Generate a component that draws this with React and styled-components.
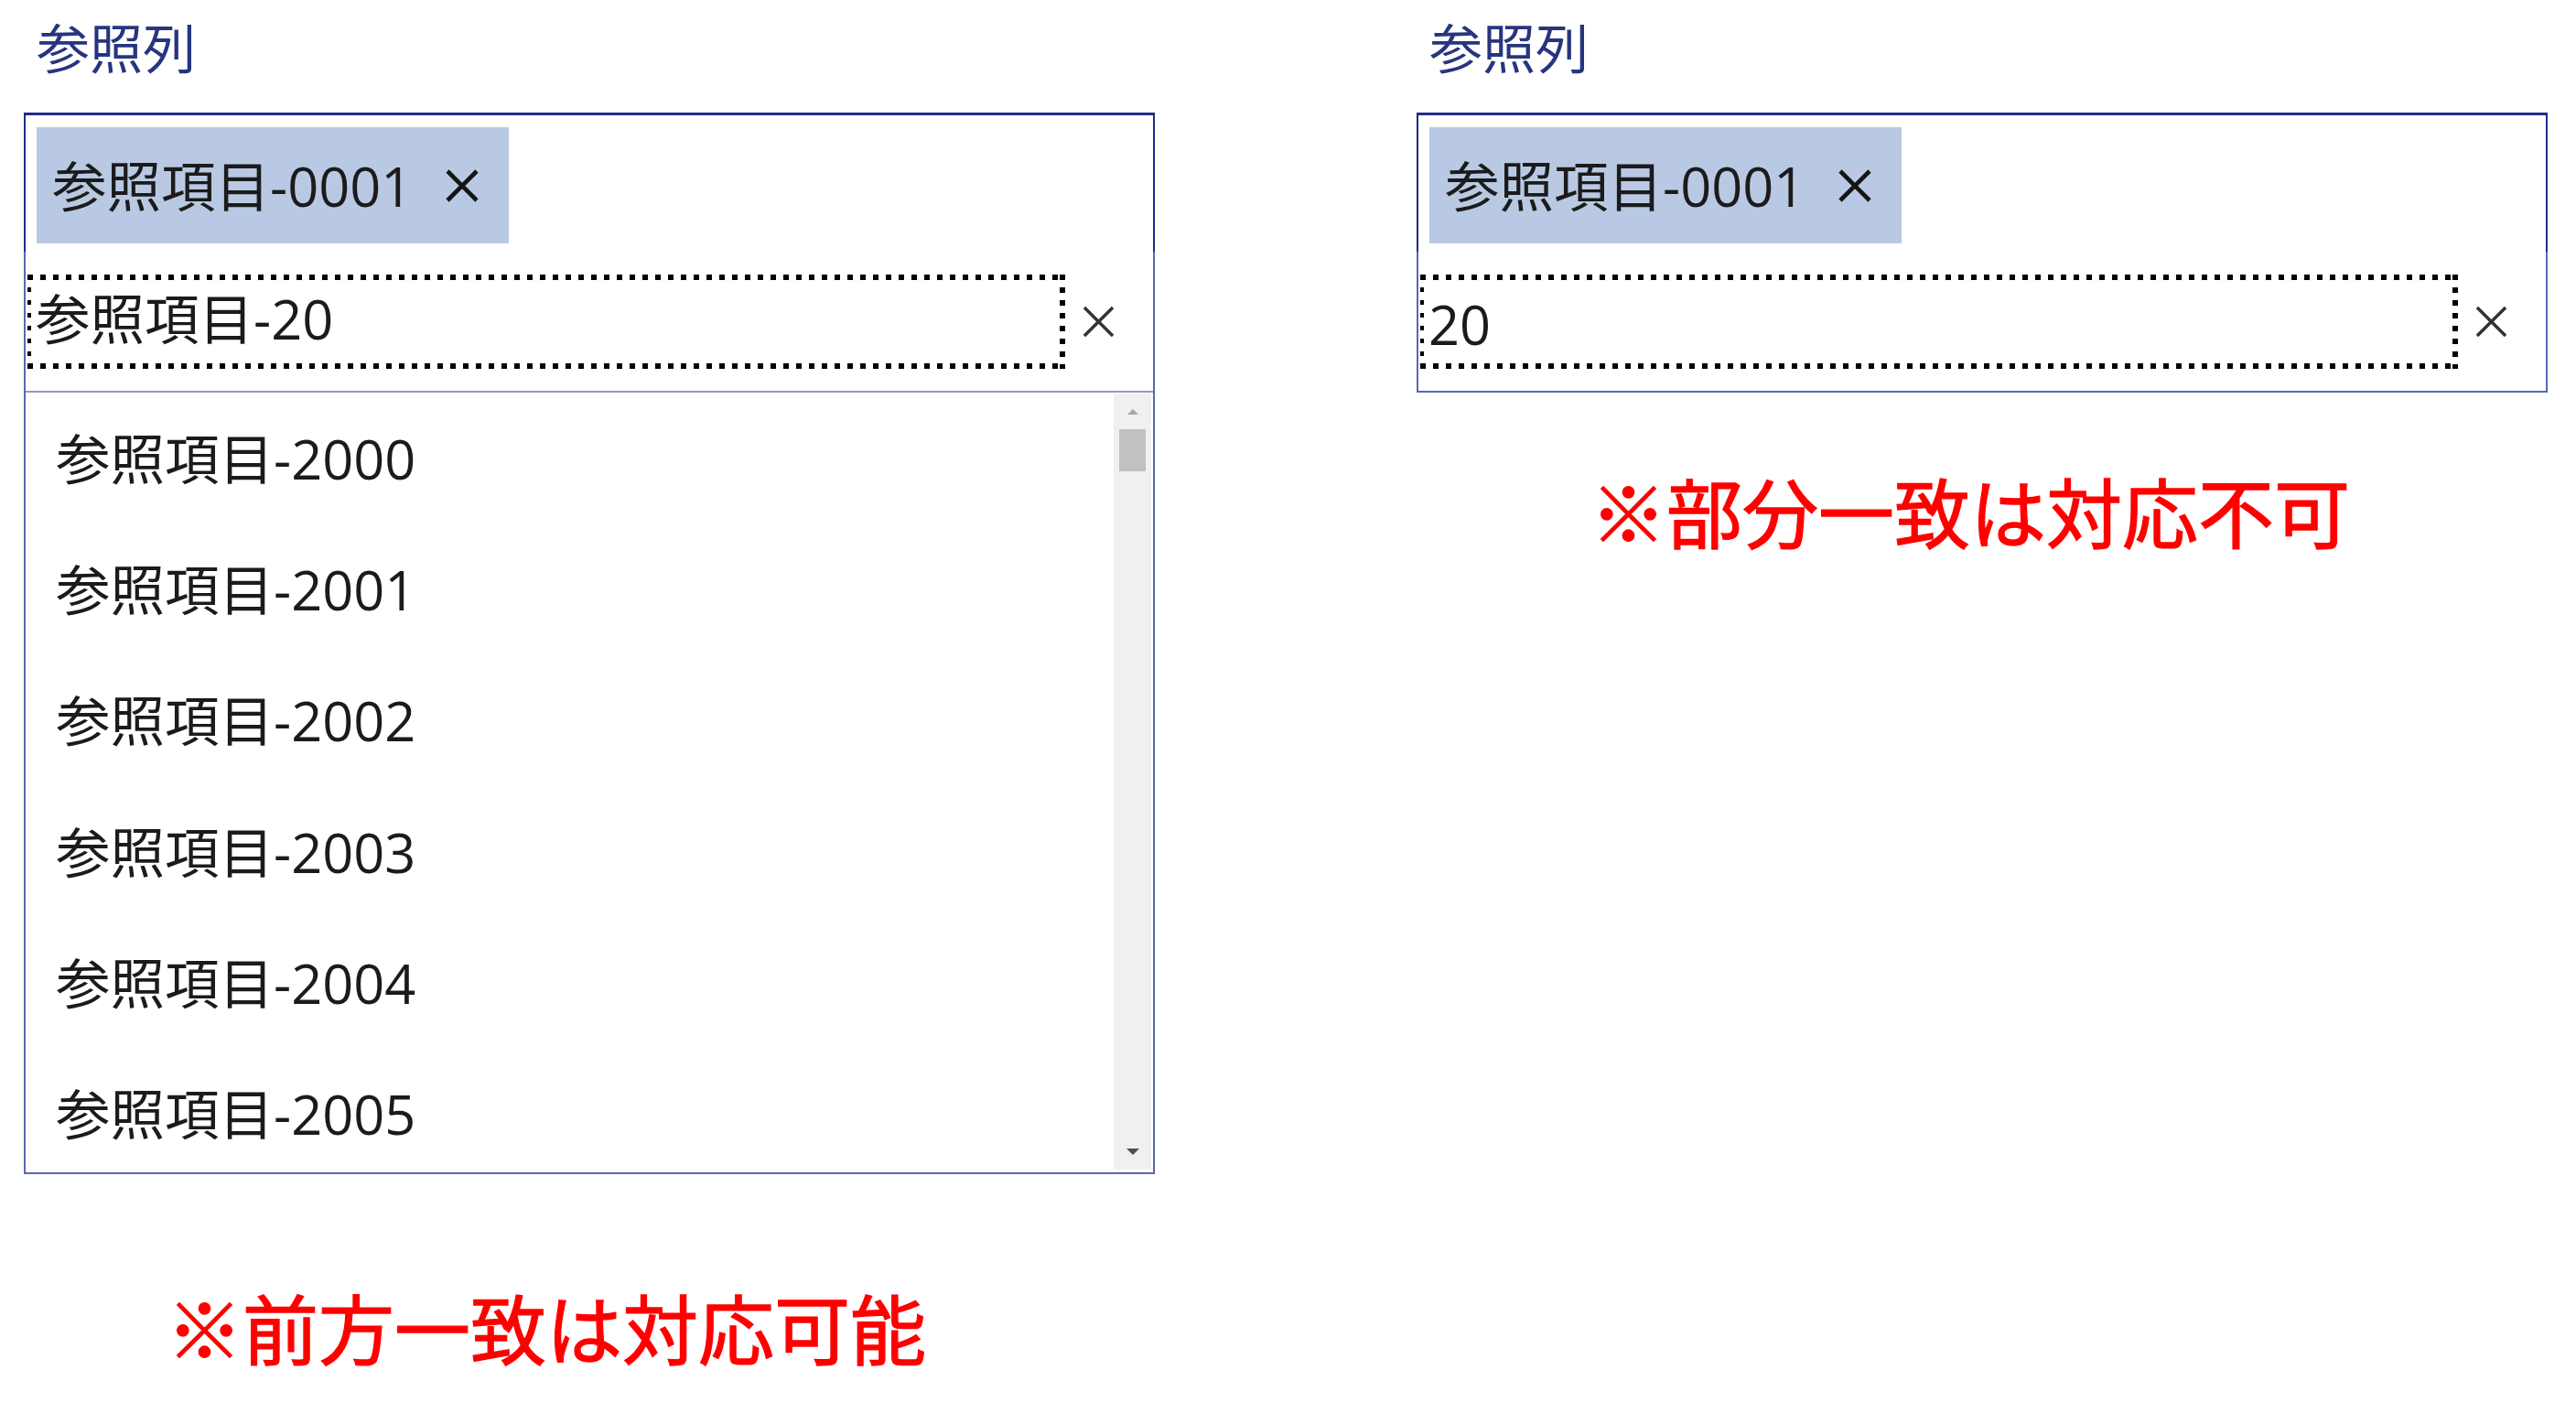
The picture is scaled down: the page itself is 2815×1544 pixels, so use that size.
import React from "react";
import styled, { createGlobalStyle } from "styled-components";

const GlobalStyle = createGlobalStyle`
  html, body {
    margin: 0;
    padding: 0;
    background: #ffffff;
  }
  body {
    font-family: "Open Sans", "Noto Sans CJK JP", sans-serif;
    color: #1b1b1b;
  }
`;

const BORDER_DARK = "#1f2c86";
const BORDER_LIGHT = "#5a67b1";
const DIVIDER = "#8d98cc";
const TEXT_SIZE = "59.5px";

const Page = styled.div`
  display: flex;
  align-items: flex-start;
  gap: 286px;
  padding-left: 26px;
  width: 2815px;
  height: 1544px;
  box-sizing: border-box;
  overflow: hidden;
`;

const Column = styled.div`
  display: flex;
  flex-direction: column;
  width: 1236px;
`;

const FieldLabel = styled.div`
  font-size: 58px;
  line-height: 58px;
  color: #27357f;
  padding: 24px 0 0 14px;
  margin-bottom: 41px;
`;

const Combo = styled.div`
  display: flex;
  flex-direction: column;
  width: 100%;
  background: #fff;
`;

const ChipArea = styled.div`
  height: 152px;
  box-sizing: border-box;
  border: 2px solid ${BORDER_DARK};
  border-top-width: 3px;
  border-bottom: none;
  padding: 13px 12px;
  display: flex;
  align-items: flex-start;
`;

const Chip = styled.div`
  width: 516px;
  height: 127px;
  box-sizing: border-box;
  background: #b9c9e3;
  display: flex;
  align-items: center;
  justify-content: space-between;
  padding: 0 33px 0 17px;
  font-size: ${TEXT_SIZE};
  line-height: 1;
  color: #1b1b1b;
  white-space: nowrap;
`;

const InputRow = styled.div`
  height: ${(p) => (p.$last ? 154 : 152)}px;
  box-sizing: border-box;
  border-left: 2px solid ${BORDER_LIGHT};
  border-right: 2px solid ${BORDER_LIGHT};
  border-bottom: ${(p) => (p.$last ? `2px solid ${BORDER_LIGHT}` : "none")};
  display: flex;
  align-items: center;
  padding-left: 2px;
  gap: 19px;
`;

/* Keyboard focus ring: square dots drawn with repeating gradients */
const FocusBox = styled.div`
  width: 1134px;
  height: 103px;
  box-sizing: border-box;
  display: flex;
  align-items: center;
  padding: ${(p) => (p.$low ? "6px 0 0 9px" : "0 0 6px 9px")};
  font-size: ${TEXT_SIZE};
  line-height: 1;
  color: #1b1b1b;
  white-space: nowrap;
  background-image:
    linear-gradient(to right, #000 6px, transparent 6px),
    linear-gradient(to right, #000 6px, transparent 6px),
    linear-gradient(to bottom, #000 5px, transparent 5px),
    linear-gradient(to bottom, #000 6px, transparent 6px);
  background-size: 14px 6px, 14px 6px, 4px 14px, 6px 14px;
  background-repeat: repeat-x, repeat-x, repeat-y, repeat-y;
  background-position: left top, left bottom, left top, right top;
`;

const Divider = styled.div`
  height: 2px;
  background: ${DIVIDER};
  border-left: 2px solid ${BORDER_LIGHT};
  border-right: 2px solid ${BORDER_LIGHT};
`;

const ListArea = styled.div`
  height: 854px;
  box-sizing: border-box;
  border: 2px solid ${BORDER_LIGHT};
  border-top: none;
  display: flex;
  overflow: hidden;
`;

const Options = styled.ul`
  flex: 1;
  list-style: none;
  margin: 0;
  padding: 0;
  overflow: hidden;
`;

const Option = styled.li`
  height: 143.3px;
  display: flex;
  align-items: center;
  padding-left: 33px;
  font-size: ${TEXT_SIZE};
  line-height: 1;
  color: #1b1b1b;
  white-space: nowrap;
`;

const Scrollbar = styled.div`
  width: 41px;
  margin: 1px 2px 3px 0;
  background: #f0f0f0;
  display: flex;
  flex-direction: column;
  align-items: center;
`;

const ArrowSlot = styled.div`
  height: 39px;
  width: 100%;
  display: flex;
  align-items: center;
  justify-content: center;
`;

const Triangle = styled.div`
  width: 0;
  height: 0;
  border-left: ${(p) => p.$size}px solid transparent;
  border-right: ${(p) => p.$size}px solid transparent;
  ${(p) =>
    p.$up
      ? `border-bottom: ${p.$size}px solid ${p.$color};`
      : `border-top: ${p.$size}px solid ${p.$color};`}
`;

const Track = styled.div`
  flex: 1;
  width: 100%;
  display: flex;
  justify-content: center;
`;

const Thumb = styled.div`
  width: 29px;
  height: 46px;
  background: #c1c1c1;
`;

const Note = styled.div`
  color: #ff0000;
  font-family: "Noto Sans CJK JP", sans-serif;
  font-weight: 400;
  font-size: 83px;
  line-height: 84px;
  white-space: nowrap;
  -webkit-text-stroke: 1.3px #ff0000;
  margin-top: ${(p) => p.$top}px;
  padding-left: ${(p) => p.$left}px;
`;

const CloseIcon = ({ size, stroke, color }) => (
  <svg width={size} height={size} viewBox="0 0 36 36" aria-hidden="true">
    <path
      d="M2 2 L34 34 M34 2 L2 34"
      stroke={color}
      strokeWidth={stroke}
      fill="none"
    />
  </svg>
);

const SelectedChip = ({ label }) => (
  <Chip>
    <span>{label}</span>
    <CloseIcon size={36} stroke={4.6} color="#151515" />
  </Chip>
);

const options = ["2000", "2001", "2002", "2003", "2004", "2005"].map(
  (n) => `参照項目-${n}`
);

export default function App() {
  return (
    <>
      <GlobalStyle />
      <Page>
        <Column>
          <FieldLabel>参照列</FieldLabel>
          <Combo>
            <ChipArea>
              <SelectedChip label="参照項目-0001" />
            </ChipArea>
            <InputRow>
              <FocusBox>参照項目-20</FocusBox>
              <CloseIcon size={35} stroke={3.6} color="#333333" />
            </InputRow>
            <Divider />
            <ListArea>
              <Options>
                {options.map((o) => (
                  <Option key={o}>{o}</Option>
                ))}
              </Options>
              <Scrollbar>
                <ArrowSlot>
                  <Triangle $up $size={6} $color="#a6a6a6" />
                </ArrowSlot>
                <Track>
                  <Thumb />
                </Track>
                <ArrowSlot>
                  <Triangle $size={7} $color="#4d4d4d" />
                </ArrowSlot>
              </Scrollbar>
            </ListArea>
          </Combo>
          <Note $top={124} $left={156}>※前方一致は対応可能</Note>
        </Column>
        <Column>
          <FieldLabel>参照列</FieldLabel>
          <Combo>
            <ChipArea>
              <SelectedChip label="参照項目-0001" />
            </ChipArea>
            <InputRow $last>
              <FocusBox $low>20</FocusBox>
              <CloseIcon size={35} stroke={3.6} color="#333333" />
            </InputRow>
          </Combo>
          <Note $top={86} $left={190}>※部分一致は対応不可</Note>
        </Column>
      </Page>
    </>
  );
}
